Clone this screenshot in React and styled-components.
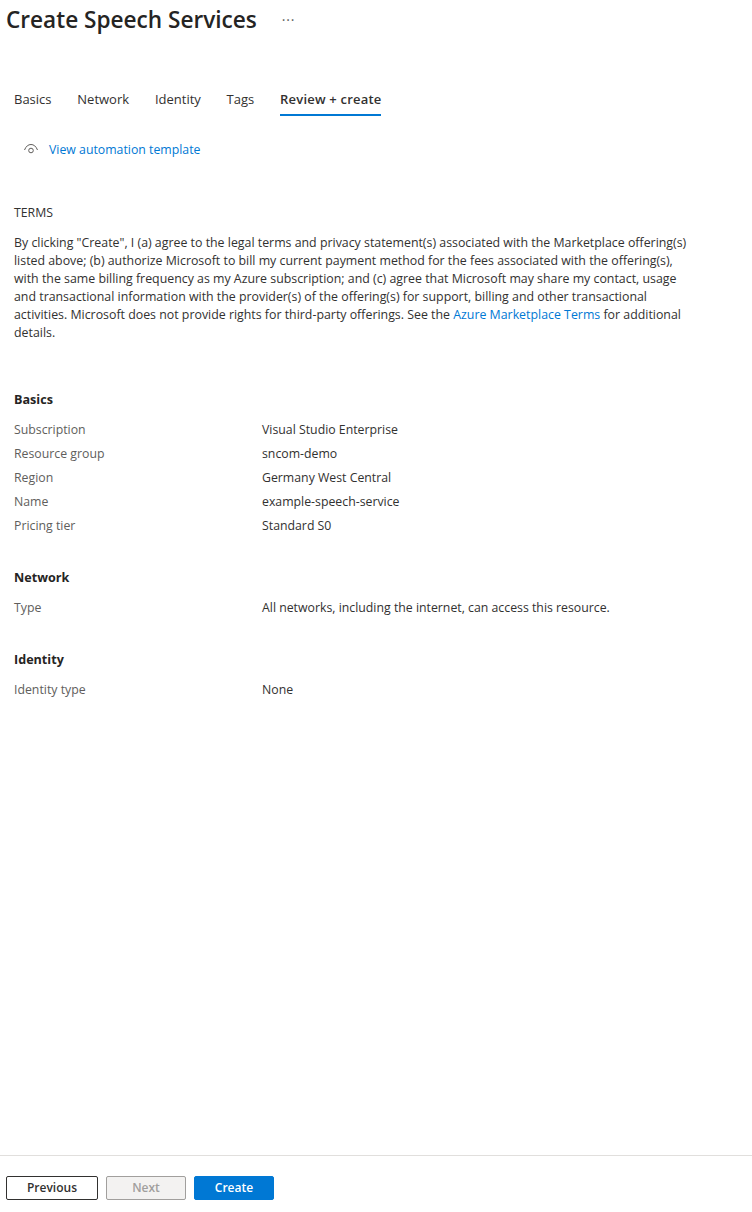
import styled, { createGlobalStyle } from "styled-components";

const GlobalStyle = createGlobalStyle`
  html, body {
    margin: 0;
    padding: 0;
    background: #fff;
  }
  body {
    font-family: "Open Sans", "Noto Sans", "Liberation Sans", sans-serif;
    font-size: 12.3px;
    color: #323130;
  }
`;

const basics = [
  ["Subscription", "Visual Studio Enterprise"],
  ["Resource group", "sncom-demo"],
  ["Region", "Germany West Central"],
  ["Name", "example-speech-service"],
  ["Pricing tier", "Standard S0"],
];

const tabs = ["Basics", "Network", "Identity", "Tags", "Review + create"];

const App = () => {
  return (
    <>
      <GlobalStyle />
      <Page>
        <Main>
          <Header>
            <Title>Create Speech Services</Title>
            <More>···</More>
          </Header>
          <TabBar>
            {tabs.map((t) => (
              <Tab key={t} $active={t === "Review + create"}>{t}</Tab>
            ))}
          </TabBar>
          <TemplateLink>
            <svg width="16" height="12" viewBox="0 0 16 12" fill="none" stroke="#605e5c" strokeWidth="1">
              <path d="M1.5 7 C3 3.2 5.3 1.5 8 1.5 C10.7 1.5 13 3.2 14.5 7" />
              <circle cx="8" cy="7.5" r="2.3" />
            </svg>
            <LinkText>View automation template</LinkText>
          </TemplateLink>
          <Terms>
            <TermsTitle>TERMS</TermsTitle>
            <TermsBody>
              By clicking "Create", I (a) agree to the legal terms and privacy statement(s) associated with the Marketplace offering(s)<br />
              listed above; (b) authorize Microsoft to bill my current payment method for the fees associated with the offering(s),<br />
              with the same billing frequency as my Azure subscription; and (c) agree that Microsoft may share my contact, usage<br />
              and transactional information with the provider(s) of the offering(s) for support, billing and other transactional<br />
              activities. Microsoft does not provide rights for third-party offerings. See the <LinkText>Azure Marketplace Terms</LinkText> for additional<br />
              details.
            </TermsBody>
          </Terms>
          <Section $top={49}>
            <SectionTitle>Basics</SectionTitle>
            {basics.map(([k, v]) => (
              <Row key={k}><Key>{k}</Key><span>{v}</span></Row>
            ))}
          </Section>
          <Section $top={31}>
            <SectionTitle>Network</SectionTitle>
            <Row><Key>Type</Key><span>All networks, including the internet, can access this resource.</span></Row>
          </Section>
          <Section $top={31}>
            <SectionTitle>Identity</SectionTitle>
            <Row><Key>Identity type</Key><span>None</span></Row>
          </Section>
        </Main>
        <Footer>
          <Button $width={92}>Previous</Button>
          <Button $width={80} $variant="disabled" disabled>Next</Button>
          <Button $width={80} $variant="primary">Create</Button>
        </Footer>
      </Page>
    </>
  );
};

export default App;

const Page = styled.div`
  width: 752px;
  height: 1212px;
  display: flex;
  flex-direction: column;
  overflow: hidden;
`;

const Main = styled.div`
  flex: 1;
`;

const Header = styled.div`
  display: flex;
  align-items: center;
  padding: 3px 0 0 6px;
  height: 33px;
`;

const Title = styled.h1`
  margin: 0;
  font-size: 22.6px;
  line-height: 33px;
  font-weight: 600;
  color: #252423;
`;

const More = styled.span`
  margin-left: 25px;
  color: #605e5c;
  font-size: 14px;
  letter-spacing: 0.8px;
`;

const TabBar = styled.div`
  display: flex;
  gap: 25.8px;
  margin: 47px 0 0 14px;
  font-size: 13px;
`;

const Tab = styled.div`
  height: 33px;
  line-height: 33px;
  box-sizing: border-box;
  font-weight: ${(p) => (p.$active ? 600 : 400)};
  letter-spacing: ${(p) => (p.$active ? "0.2px" : "0")};
  border-bottom: 2px solid ${(p) => (p.$active ? "#0078d4" : "transparent")};
`;

const TemplateLink = styled.div`
  display: flex;
  align-items: center;
  gap: 10px;
  margin: 24px 0 0 23px;
  height: 18px;
`;

const LinkText = styled.span`
  color: #0078d4;
`;

const Terms = styled.div`
  margin: 46px 0 0 14px;
  width: 700px;
`;

const TermsTitle = styled.div`
  line-height: 18px;
  margin-bottom: 12px;
`;

const TermsBody = styled.div`
  font-size: 12.37px;
  line-height: 18px;
  white-space: nowrap;
`;

const Section = styled.div`
  margin: ${(p) => p.$top}px 0 0 14px;
`;

const SectionTitle = styled.div`
  font-size: 12.6px;
  font-weight: 700;
  line-height: 18px;
  margin-bottom: 9px;
  color: #252423;
`;

const Row = styled.div`
  display: grid;
  grid-template-columns: 248px 1fr;
  height: 24px;
  line-height: 24px;
`;

const Key = styled.span`
  color: #605e5c;
`;

const Footer = styled.div`
  display: flex;
  gap: 8px;
  height: 57px;
  box-sizing: border-box;
  padding: 20px 0 0 6px;
  border-top: 1px solid #e1dfdd;
`;

const Button = styled.button`
  width: ${(p) => p.$width}px;
  height: 24px;
  padding: 0 0 2px;
  border-radius: 2px;
  font-family: inherit;
  font-size: 12px;
  font-weight: 600;
  border: 1px solid ${(p) =>
    p.$variant === "primary" ? "#0078d4" : p.$variant === "disabled" ? "#a19f9d" : "#323130"};
  background: ${(p) =>
    p.$variant === "primary" ? "#0078d4" : p.$variant === "disabled" ? "#f3f2f1" : "#fff"};
  color: ${(p) =>
    p.$variant === "primary" ? "#fff" : p.$variant === "disabled" ? "#a19f9d" : "#323130"};
`;
